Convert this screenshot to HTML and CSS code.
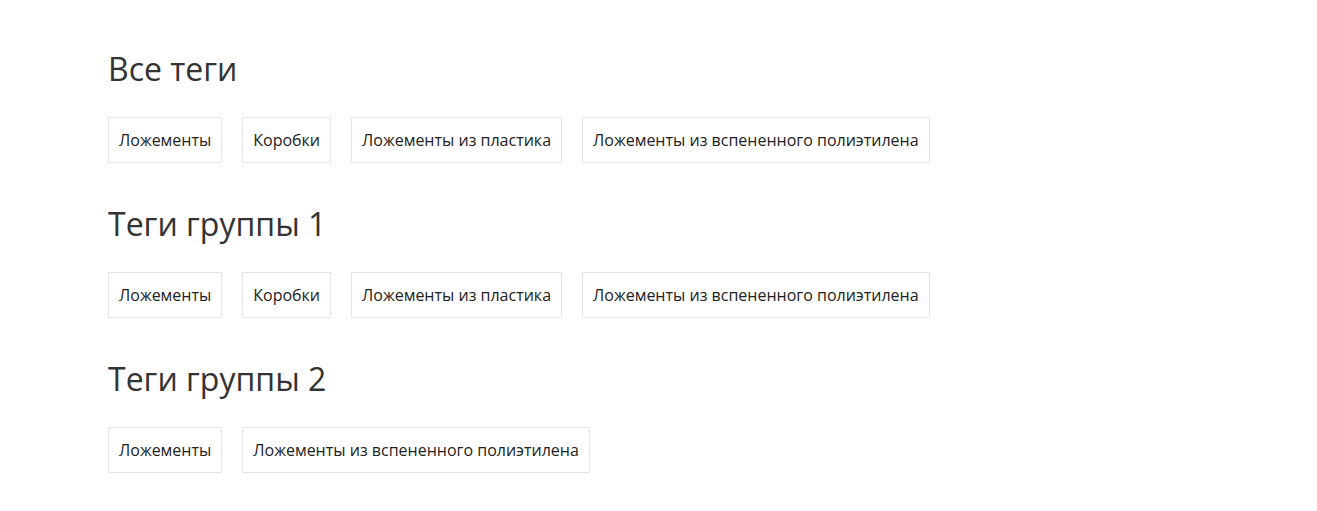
FILE: index.html
```html
<!DOCTYPE html>
<html lang="ru">
<head>
  <meta charset="UTF-8">
  <meta name="viewport" content="width=device-width, initial-scale=1.0">
  <title>Теги</title>
  <link rel="stylesheet" href="styles.css">
</head>
<body>
  <div class="page">
    <section class="tag-group">
      <h2>Все теги</h2>
      <ul class="tags">
        <li><a href="#">Ложементы</a></li>
        <li><a href="#">Коробки</a></li>
        <li><a href="#">Ложементы из пластика</a></li>
        <li><a href="#">Ложементы из вспененного полиэтилена</a></li>
      </ul>
    </section>

    <section class="tag-group">
      <h2>Теги группы 1</h2>
      <ul class="tags">
        <li><a href="#">Ложементы</a></li>
        <li><a href="#">Коробки</a></li>
        <li><a href="#">Ложементы из пластика</a></li>
        <li><a href="#">Ложементы из вспененного полиэтилена</a></li>
      </ul>
    </section>

    <section class="tag-group">
      <h2>Теги группы 2</h2>
      <ul class="tags">
        <li><a href="#">Ложементы</a></li>
        <li><a href="#">Ложементы из вспененного полиэтилена</a></li>
      </ul>
    </section>
  </div>
</body>
</html>
```

FILE: styles.css
```css
body { margin: 0; font-family: "Open Sans", Arial, sans-serif; color: #333; background: #fff; }
.page { padding: 47px 108px 0; }
.tag-group { margin-bottom: 39px; }
.tag-group h2 { margin: 0 0 26px; font-size: 32px; font-weight: 400; line-height: 44px; color: #333; }
.tags { list-style: none; margin: 0; padding: 0; display: flex; flex-wrap: wrap; gap: 20px; }
.tags a { display: block; padding: 0 10px; line-height: 44px; font-size: 16px; color: #222; text-decoration: none; border: 1px solid #e5e5e5; }
```
